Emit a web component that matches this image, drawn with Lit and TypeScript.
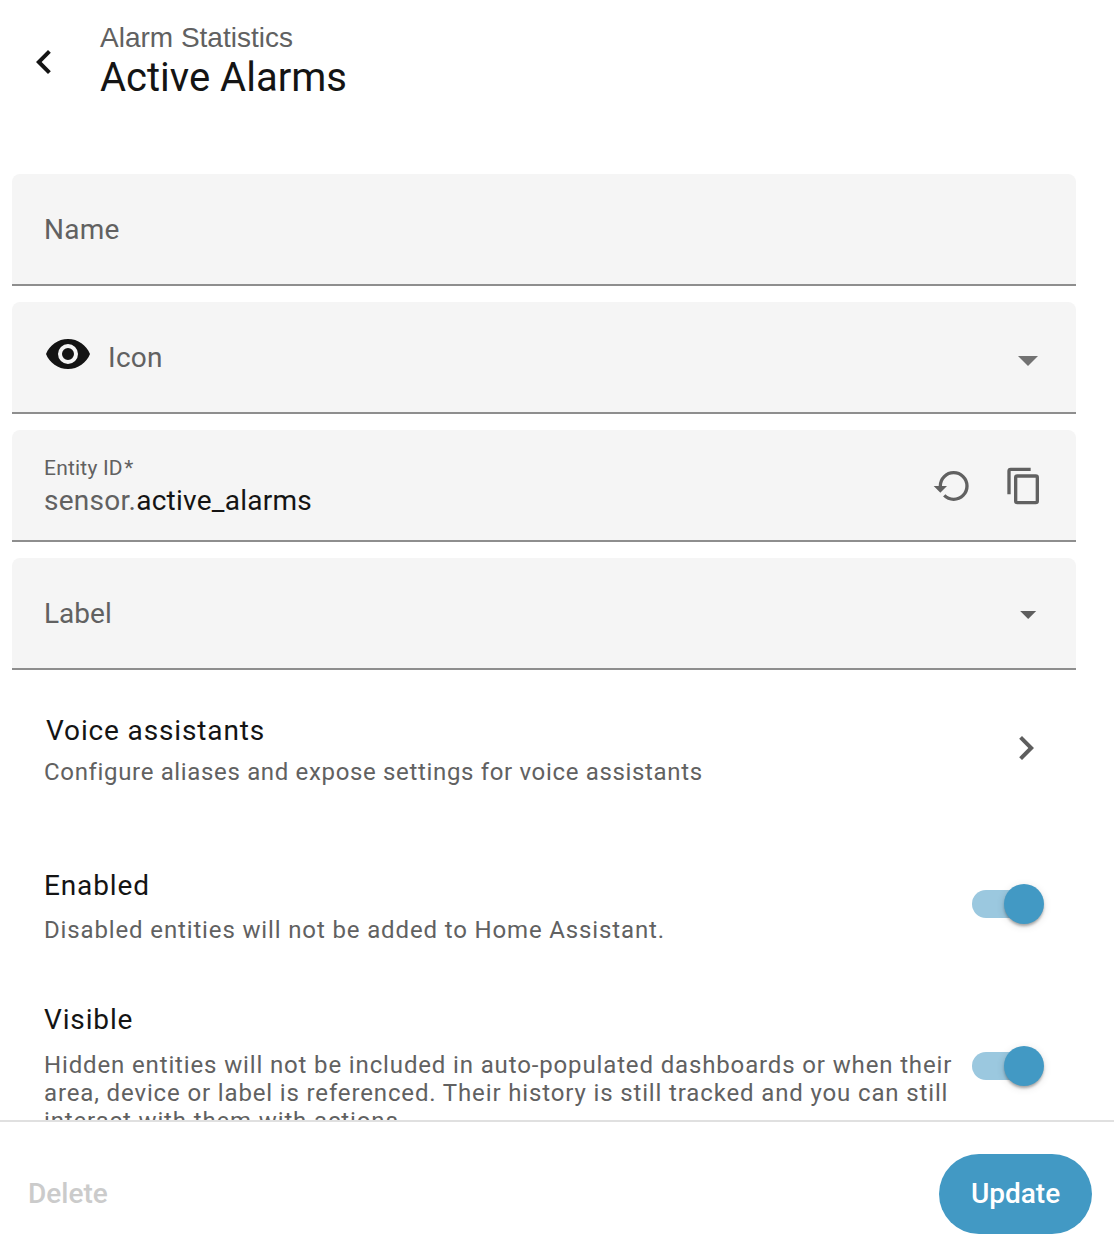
import { LitElement, html, css, svg } from "lit";
import { customElement, property } from "lit/decorators.js";

const ICONS: Record<string, string> = {
  chevronLeft: "M15.41,16.58L10.83,12L15.41,7.41L14,6L8,12L14,18L15.41,16.58Z",
  chevronRight: "M8.59,16.58L13.17,12L8.59,7.41L10,6L16,12L10,18L8.59,16.58Z",
  eye: "M12,9A3,3 0 0,0 9,12A3,3 0 0,0 12,15A3,3 0 0,0 15,12A3,3 0 0,0 12,9M12,17A5,5 0 0,1 7,12A5,5 0 0,1 12,7A5,5 0 0,1 17,12A5,5 0 0,1 12,17M12,4.5C7,4.5 2.73,7.61 1,12C2.73,16.39 7,19.5 12,19.5C17,19.5 21.27,16.39 23,12C21.27,7.61 17,4.5 12,4.5Z",
  menuDown: "M7,10L12,15L17,10H7Z",
  restore: "M13,3A9,9 0 0,0 4,12H1L4.89,15.89L4.96,16.03L9,12H6A7,7 0 0,1 13,5A7,7 0 0,1 20,12A7,7 0 0,1 13,19C11.07,19 9.32,18.21 8.06,16.94L6.64,18.36C8.27,20 10.5,21 13,21A9,9 0 0,0 22,12A9,9 0 0,0 13,3Z",
  copy: "M19,21H8V7H19M19,5H8A2,2 0 0,0 6,7V21A2,2 0 0,0 8,23H19A2,2 0 0,0 21,21V7A2,2 0 0,0 19,5M16,1H4A2,2 0 0,0 2,3V17H4V3H16V1Z",
};

@customElement("ui-icon")
export class UiIcon extends LitElement {
  @property() name = "";
  static styles = css`
    :host { display: block; flex: none; width: 48px; height: 48px; }
    svg { display: block; width: 100%; height: 100%; fill: currentColor; }
  `;
  render() {
    return html`<svg viewBox="0 0 24 24">${svg`<path d=${ICONS[this.name]}></path>`}</svg>`;
  }
}

@customElement("ui-switch")
export class UiSwitch extends LitElement {
  static styles = css`
    :host { display: flex; align-items: center; flex: none; width: 72px; height: 40px; }
    .track { width: 64px; height: 28px; border-radius: 14px; background: #9bc8df; }
    .thumb {
      width: 40px; height: 40px; margin-left: -32px; border-radius: 50%; flex: none;
      background: #4299c4;
      box-shadow: 0 3px 3px -1px rgba(0, 0, 0, 0.2), 0 2px 3px rgba(0, 0, 0, 0.14), 0 2px 8px rgba(0, 0, 0, 0.12);
    }
  `;
  render() {
    return html`<div class="track"></div><div class="thumb"></div>`;
  }
}

@customElement("app-root")
export class AppRoot extends LitElement {
  static styles = css`
    :host {
      display: flex; flex-direction: column; box-sizing: border-box;
      width: 1114px; height: 1240px; overflow: hidden; background: #fff;
      font-family: Roboto, "Liberation Sans", sans-serif; color: #141414;
    }
    .header { display: flex; height: 174px; box-sizing: border-box; padding: 22px 0 0 20px; flex: none; }
    .back { margin-top: 16px; }
    .titles { margin-left: 32px; }
    .subtitle { font: 28px/32px "Liberation Sans", Arial, sans-serif; color: #616161; }
    .title { font-size: 40px; line-height: 48px; }
    .content { flex: 1; min-height: 0; overflow: hidden; }
    .fields { display: flex; flex-direction: column; gap: 16px; padding: 0 38px 0 12px; }
    .field {
      display: flex; align-items: center; box-sizing: border-box; height: 112px;
      padding: 2px 32px 0; border-radius: 8px 8px 0 0; background: #f5f5f5;
      border-bottom: 2px solid #8e8e8e; color: #616161;
      font-size: 28px; line-height: 32px; letter-spacing: 0.26px;
    }
    .grow { flex: 1; }
    .tight { letter-spacing: 0; }
    .eye { color: #141414; margin: -8px 16px 0 0; }
    .arrow { color: #727272; margin: 4px -8px 0 0; }
    .arrow.small { width: 38.4px; height: 38.4px; margin: 1px -3.2px 0 0; color: #5e5e5e; }
    .small-label { font-size: 21px; line-height: 24px; letter-spacing: 0.2px; margin-top: 1px; }
    .required { margin-left: 1.5px; }
    .value { line-height: 33px; margin-top: 4px; }
    .value span { color: #141414; }
    .action { width: 40px; height: 40px; }
    .action + .action { margin-left: 32px; }
    .row { display: flex; padding: 0 70px 0 44px; }
    .row-title { font-size: 28px; line-height: 32px; letter-spacing: 0.86px; }
    .desc { font-size: 24px; line-height: 28px; color: #616161; }
    .voice { padding-top: 45px; }
    .voice .row-title { padding-left: 2px; }
    .voice .desc { margin-top: 11px; letter-spacing: 0.66px; }
    .voice ui-icon { margin: 9px -6px 0 0; color: #5e5e5e; }
    .enabled { padding-top: 84px; }
    .visible { padding-top: 60px; }
    .enabled .desc { margin-top: 14px; letter-spacing: 0.86px; }
    .visible .desc { margin-top: 15px; letter-spacing: 0.86px; white-space: nowrap; }
    .enabled ui-switch { margin-top: 14px; }
    .visible ui-switch { margin-top: 42px; }
    .footer {
      display: flex; align-items: center; justify-content: space-between; flex: none;
      box-sizing: border-box; height: 120px; padding: 26px 22px 0 28px;
      border-top: 2px solid #e0e0e0; background: #fff;
      font-size: 28px; line-height: 33px; font-weight: 500;
    }
    .delete { color: #cbcbcb; }
    .update {
      display: flex; align-items: center; justify-content: center;
      width: 153px; height: 80px; border-radius: 40px; background: #4299c4; color: #fff;
    }
    .footer span { margin-top: -1px; }
  `;
  render() {
    return html`
      <div class="header">
        <ui-icon class="back" name="chevronLeft"></ui-icon>
        <div class="titles">
          <div class="subtitle">Alarm Statistics</div>
          <div class="title">Active Alarms</div>
        </div>
      </div>
      <div class="content">
        <div class="fields">
          <div class="field"><div class="grow">Name</div></div>
          <div class="field">
            <ui-icon class="eye" name="eye"></ui-icon>
            <div class="grow">Icon</div>
            <ui-icon class="arrow" name="menuDown"></ui-icon>
          </div>
          <div class="field">
            <div class="grow">
              <div class="small-label">Entity ID<span class="required">*</span></div>
              <div class="value">sensor.<span>active_alarms</span></div>
            </div>
            <ui-icon class="action" name="restore"></ui-icon>
            <ui-icon class="action" name="copy"></ui-icon>
          </div>
          <div class="field">
            <div class="grow tight">Label</div>
            <ui-icon class="arrow small" name="menuDown"></ui-icon>
          </div>
        </div>
        <div class="row voice">
          <div class="grow">
            <div class="row-title">Voice assistants</div>
            <div class="desc">Configure aliases and expose settings for voice assistants</div>
          </div>
          <ui-icon name="chevronRight"></ui-icon>
        </div>
        <div class="row enabled">
          <div class="grow">
            <div class="row-title">Enabled</div>
            <div class="desc">Disabled entities will not be added to Home Assistant.</div>
          </div>
          <ui-switch></ui-switch>
        </div>
        <div class="row visible">
          <div class="grow">
            <div class="row-title">Visible</div>
            <div class="desc">
              Hidden entities will not be included in auto-populated dashboards or when their<br />area,
              device or label is referenced. Their history is still tracked and you can still<br />interact
              with them with actions.
            </div>
          </div>
          <ui-switch></ui-switch>
        </div>
      </div>
      <div class="footer">
        <span class="delete">Delete</span>
        <div class="update"><span>Update</span></div>
      </div>
    `;
  }
}
